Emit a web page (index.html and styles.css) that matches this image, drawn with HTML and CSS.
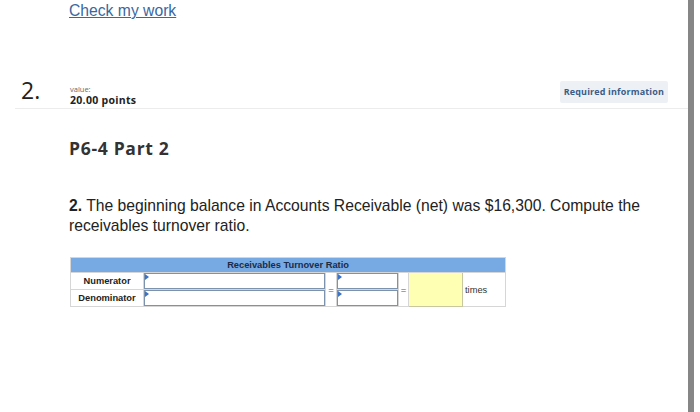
FILE: index.html
```html
<!DOCTYPE html>
<html>
<head>
<meta charset="utf-8">
<link rel="stylesheet" href="styles.css">
</head>
<body>
<div class="page">
  <main class="main">
    <div class="check"><a href="#">Check my work</a></div>
    <div class="qhead">
      <div class="qnum">2.</div>
      <div class="qvalue">
        <div class="vlabel">value:</div>
        <div class="vpoints">20.00 points</div>
      </div>
      <div class="req">Required information</div>
    </div>
    <div class="content">
      <h2 class="title">P6-4 Part 2</h2>
      <p class="question"><b class="qn">2.</b> The beginning balance in Accounts Receivable (net) was $16,300. Compute the receivables turnover ratio.</p>
      <table class="ratio">
        <colgroup>
          <col class="c-label"><col class="c-in1"><col class="c-eq"><col class="c-in2"><col class="c-eq2"><col class="c-res"><col class="c-unit">
        </colgroup>
        <tr><th colspan="7" class="thead">Receivables Turnover Ratio</th></tr>
        <tr>
          <td class="label">Numerator</td>
          <td class="inp"><div class="box"><span class="flag"></span></div></td>
          <td class="eq" rowspan="2">=</td>
          <td class="inp"><div class="box"><span class="flag"></span></div></td>
          <td class="eq" rowspan="2">=</td>
          <td class="res" rowspan="2"></td>
          <td class="unit" rowspan="2">times</td>
        </tr>
        <tr>
          <td class="label">Denominator</td>
          <td class="inp"><div class="box"><span class="flag"></span></div></td>
          <td class="inp"><div class="box"><span class="flag"></span></div></td>
        </tr>
      </table>
    </div>
  </main>
  <div class="rail"></div>
  <div class="edge"></div>
</div>
</body>
</html>
```
FILE: styles.css
```css
html, body {
  margin: 0;
  padding: 0;
  background: #fff;
}
body {
  font-family: "Liberation Sans", Arial, sans-serif;
  color: #222;
}
.page {
  display: flex;
  height: 412px;
  overflow: hidden;
}
.main {
  width: 688px;
  flex: none;
}
.rail {
  width: 6px;
  flex: none;
  background: #868686;
}
.edge {
  flex: 1;
  background: #fff;
}
.check {
  padding: 1px 0 0 69px;
  font-size: 15.7px;
  line-height: 19px;
}
.check a {
  color: #3a67a0;
  text-decoration: underline;
}
.qhead {
  margin: 61px 0 0 15px;
  height: 27px;
  border-bottom: 1px solid #ececec;
  display: flex;
  align-items: flex-start;
  font-family: "Open Sans", "Noto Sans", sans-serif;
}
.qnum {
  width: 55px;
  padding-left: 6px;
  box-sizing: border-box;
  font-size: 23px;
  line-height: 24px;
  color: #222;
  font-weight: 400;
  margin-top: -3px;
}
.qvalue {
  flex: 1;
  margin-top: 3px;
}
.vlabel {
  font-size: 7.5px;
  line-height: 10px;
  color: #6a6a6a;
}
.vpoints {
  font-size: 10.5px;
  line-height: 13px;
  font-weight: 700;
  color: #222;
  letter-spacing: 0.3px;
}
.req {
  margin-right: 20px;
  margin-top: 0;
  background: #edf1f6;
  color: #3d5c86;
  font-size: 9px;
  font-weight: 700;
  padding: 5px 4px;
  line-height: 12px;
  letter-spacing: 0.15px;
  border-radius: 2px;
}
.content {
  padding-left: 69px;
}
.title {
  margin: 29px 0 0 0;
  font-family: "Open Sans", "Noto Sans", sans-serif;
  font-size: 17.5px;
  line-height: 20px;
  font-weight: 700;
  color: #333;
  letter-spacing: 0.7px;
}
.question {
  margin: 38px 0 0 0;
  font-size: 15.7px;
  line-height: 20px;
  color: #222;
  width: 590px;
}
.qn {
  font-weight: 700;
}
.ratio {
  margin: 21px 0 0 1px;
  border-collapse: collapse;
  table-layout: fixed;
  width: 435px;
  font-size: 9.3px;
}
.c-label { width: 73px; }
.c-in1 { width: 182px; }
.c-eq { width: 11px; }
.c-in2 { width: 62px; }
.c-eq2 { width: 10px; }
.c-res { width: 54px; }
.c-unit { width: 43px; }
.ratio td, .ratio th {
  padding: 0;
  border: 1px solid #d6d6d6;
}
.thead {
  background: #77a9e2;
  height: 14px;
  font-weight: 700;
  color: #1c2b45;
  text-align: center;
  line-height: 13px;
}
.label {
  height: 16px;
  text-align: center;
  font-weight: 700;
  color: #222;
  background: #fff;
}
.inp {
  height: 16px;
}
.box {
  position: relative;
  height: 16px;
  border: 1px solid #7d92ad;
  box-sizing: border-box;
  background: #fff;
}
.flag {
  position: absolute;
  left: 0;
  top: 0;
  width: 0;
  height: 0;
  border-top: 3px solid transparent;
  border-bottom: 3px solid transparent;
  border-left: 4px solid #3b73c8;
}
.eq {
  text-align: center;
  color: #555;
  font-size: 9.5px;
}
.res {
  background: #ffffb3;
  border: 1px solid #c8c8a0 !important;
}
.unit {
  padding-left: 2px !important;
  color: #333;
}
```
